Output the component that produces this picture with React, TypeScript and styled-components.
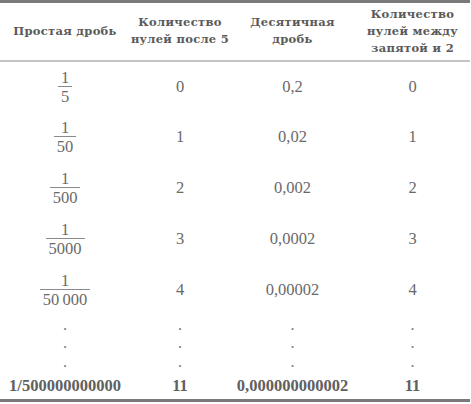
import React from "react";
import styled, { createGlobalStyle } from "styled-components";

const Global = createGlobalStyle`
  html, body { margin: 0; padding: 0; background: #fff; }
  body { font-family: "Liberation Serif", "DejaVu Serif", serif; }
  *, *::before, *::after { box-sizing: border-box; }
`;

const Table = styled.table`
  width: 470px;
  border-collapse: collapse;
  table-layout: fixed;
  color: #666;
  border-top: 3px solid #7a7a7a;
  border-bottom: 3px solid #7a7a7a;
`;

const Col = styled.col<{ $w: number }>`
  width: ${(p) => p.$w}px;
`;

const Head = styled.th`
  height: 59px;
  padding: 0;
  font-family: "DejaVu Serif", "Liberation Serif", serif;
  font-size: 11.5px;
  letter-spacing: 0.3px;
  line-height: 17px;
  font-weight: bold;
  color: #5a5a5a;
  text-align: center;
  vertical-align: middle;
  white-space: nowrap;
  border-bottom: 2px solid #c4c4c4;
`;

const Cell = styled.td<{ $strong?: boolean }>`
  height: 51px;
  padding: 0;
  font-size: 16.5px;
  font-weight: ${(p) => (p.$strong ? "bold" : "normal")};
  color: ${(p) => (p.$strong ? "#606060" : "#6a6a6a")};
  text-align: center;
  vertical-align: middle;
  white-space: nowrap;
`;

const DotCell = styled.td`
  padding: 0;
  font-size: 16px;
  line-height: 18.5px;
  text-align: center;
  vertical-align: top;
  color: #777;
`;

const LastRow = styled.tr`
  td {
    height: 29px;
    padding-top: 2px;
  }
`;

const Frac = styled.span`
  display: inline-flex;
  flex-direction: column;
  align-items: stretch;
  font-size: 16.5px;
  line-height: 17px;
  vertical-align: middle;
`;

const Num = styled.span`
  padding: 0 3px;
  text-align: center;
`;

const Den = styled.span`
  padding: 1px 3px 0;
  text-align: center;
  border-top: 1px solid #8a8a8a;
`;

const rows = [
  { d: "5", z: "0", dec: "0,2", z2: "0" },
  { d: "50", z: "1", dec: "0,02", z2: "1" },
  { d: "500", z: "2", dec: "0,002", z2: "2" },
  { d: "5000", z: "3", dec: "0,0002", z2: "3" },
  { d: "50\u2009000", z: "4", dec: "0,00002", z2: "4" },
];

const Dots = () => (
  <>
    .<br />.<br />.
  </>
);

export default function App() {
  return (
    <>
      <Global />
      <Table>
        <colgroup>
          <Col $w={130} />
          <Col $w={100} />
          <Col $w={125} />
          <Col $w={115} />
        </colgroup>
        <thead>
          <tr>
            <Head>Простая дробь</Head>
            <Head>
              Количество
              <br />
              нулей после 5
            </Head>
            <Head>
              Десятичная
              <br />
              дробь
            </Head>
            <Head>
              Количество
              <br />
              нулей между
              <br />
              запятой и 2
            </Head>
          </tr>
        </thead>
        <tbody>
          {rows.map((r) => (
            <tr key={r.d}>
              <Cell>
                <Frac>
                  <Num>1</Num>
                  <Den>{r.d}</Den>
                </Frac>
              </Cell>
              <Cell>{r.z}</Cell>
              <Cell>{r.dec}</Cell>
              <Cell>{r.z2}</Cell>
            </tr>
          ))}
          <tr>
            <DotCell><Dots /></DotCell>
            <DotCell><Dots /></DotCell>
            <DotCell><Dots /></DotCell>
            <DotCell><Dots /></DotCell>
          </tr>
          <LastRow>
            <Cell $strong>1/500000000000</Cell>
            <Cell $strong>11</Cell>
            <Cell $strong>0,000000000002</Cell>
            <Cell $strong>11</Cell>
          </LastRow>
        </tbody>
      </Table>
    </>
  );
}
